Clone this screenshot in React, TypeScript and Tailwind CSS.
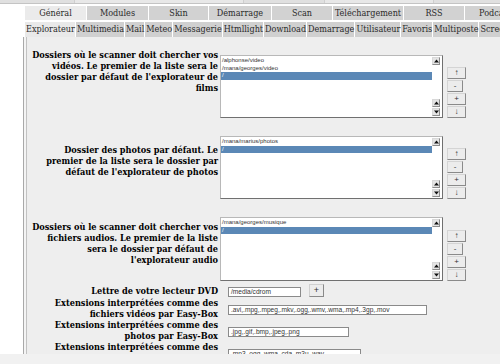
const serif = "font-['DejaVu_Serif_Condensed','DejaVu_Serif',serif]";
const sans = "font-['Liberation_Sans',Arial,sans-serif]";

const tabs = [
  { label: "Général", w: "w-[61px]", active: true },
  { label: "Modules", w: "w-[61px]" },
  { label: "Skin", w: "w-[59px]" },
  { label: "Démarrage", w: "w-[62px]" },
  { label: "Scan", w: "w-[60px]" },
  { label: "Téléchargement", w: "w-[70px]" },
  { label: "RSS", w: "w-[60px]" },
  { label: "Podcast", w: "w-[60px]" },
];

const subTabs = [
  "Explorateur",
  "Multimedia",
  "Mail",
  "Meteo",
  "Messagerie",
  "Htmllight",
  "Download",
  "Demarrage",
  "Utilisateur",
  "Favoris",
  "Multiposte",
  "Screensaver",
];

function Arrow({ down }: { down?: boolean }) {
  return (
    <div className="flex h-[8px] w-[8px] items-center justify-center border border-[#d8d8d8] border-r-[#8c8c8c] border-b-[#8c8c8c] bg-[#e4e4e4]">
      <svg width="5" height="4" viewBox="0 0 5 4">
        {down ? <path d="M0 0.5h5L2.5 3.5z" fill="#111" /> : <path d="M0 3.5h5L2.5 0.5z" fill="#111" />}
      </svg>
    </div>
  );
}

function ListBox({ items, h }: { items: string[]; h: string }) {
  return (
    <div className={`ml-[2px] flex w-[223px] shrink-0 border border-[#b8b8b8] border-r-[#707070] border-b-[#707070] bg-white ${h}`}>
      <div className={`flex-1 pt-px ${sans} text-[6px] text-[#333]`}>
        {items.map((it, i) =>
          i === items.length - 1 ? (
            <div key={i} className="h-[7.5px] bg-[#5b88b6] pl-px leading-[7.5px] text-white">
              {it}
            </div>
          ) : (
            <div key={i} className="h-[7.5px] pl-px leading-[7.5px]">
              {it}
            </div>
          )
        )}
      </div>
      <div className="flex w-[10px] flex-col justify-between py-px">
        <Arrow />
        <div className="flex flex-col gap-px">
          <Arrow />
          <Arrow down />
        </div>
      </div>
    </div>
  );
}

function SideButtons() {
  const btn =
    "flex h-[12px] items-center justify-center border border-[#d4d4d4] border-r-[#8a8a8a] border-b-[#8a8a8a] bg-[#ececec] text-[8px] leading-none text-[#333]";
  return (
    <div className={`ml-[4px] flex flex-col gap-px self-end ${sans}`}>
      <div className={`${btn} w-[19px]`}>↑</div>
      <div className={`${btn} w-[16px]`}>-</div>
      <div className={`${btn} w-[19px]`}>+</div>
      <div className={`${btn} w-[19px]`}>↓</div>
    </div>
  );
}

function FolderRow({ label, items, pt, h }: { label: string; items: string[]; pt: string; h: string }) {
  return (
    <div className="flex items-start">
      <div className={`w-[191px] shrink-0 text-right text-[9.1px] font-bold leading-[11px] text-black ${pt}`}>{label}</div>
      <div className="flex pt-[18px]">
        <ListBox items={items} h={h} />
        <SideButtons />
      </div>
    </div>
  );
}

function FieldRow({ label, value, w }: { label: string; value: string; w: string }) {
  return (
    <div className="flex h-[22px] items-center">
      <div className="w-[191px] shrink-0 text-right text-[9.1px] font-bold leading-[11px] text-black">{label}</div>
      <div
        className={`ml-[10px] mt-[3px] h-[10px] shrink-0 overflow-hidden border border-[#8a8a8a] bg-white pl-[2px] ${sans} text-[6.6px] leading-[8px] text-[#333] ${w}`}
      >
        {value}
      </div>
    </div>
  );
}

export default function App() {
  return (
    <div className={`flex h-[364px] w-[500px] flex-col overflow-hidden bg-white ${serif}`}>
      <div className="flex h-[354px] flex-col overflow-hidden">
        <div className="flex h-[4px] shrink-0 border-b border-[#c4c4c4] bg-[#e0e0e0]">
          <div className="ml-[74px] w-[170px] border-x border-[#cfcfcf] bg-[#e8e8e8]" />
          <div className="ml-[80px] w-[110px] border-x border-[#cfcfcf] bg-[#e8e8e8]" />
        </div>

        <div className="ml-[25px] mt-[2px] flex h-[14px] shrink-0 gap-px">
          {tabs.map((t) =>
            t.active ? (
              <div key={t.label} className={`${t.w} shrink-0 bg-[#ebebeb] text-center text-[9px] leading-[14px] text-[#2a2a2a]`}>
                {t.label}
              </div>
            ) : (
              <div key={t.label} className={`${t.w} shrink-0 bg-[#d2d2d2] text-center text-[9px] leading-[14px] text-[#2a2a2a]`}>
                {t.label}
              </div>
            )
          )}
        </div>

        <div className="ml-[25px] mt-[2px] flex h-[15px] shrink-0 gap-px whitespace-nowrap">
          {subTabs.map((s, i) =>
            i === 0 ? (
              <div key={s} className="shrink-0 bg-[#e9e9e9] pl-px text-[9px] leading-[15px] text-[#2a2a2a]">
                {s}
              </div>
            ) : (
              <div key={s} className="shrink-0 bg-[#d0d0d0] pl-px text-[9px] leading-[15px] text-[#2a2a2a]">
                {s}
              </div>
            )
          )}
        </div>

        <div className="ml-[23px] flex flex-1 border-l border-[#a9a9a9] bg-[#f4f4f4] pl-[2px]">
          <div className="flex-1 border-l border-[#c2c2c2] bg-[#eeeeee]">
            <FolderRow
              label="Dossiers où le scanner doit chercher vos vidéos. Le premier de la liste sera le dossier par défaut de l'explorateur de films"
              items={["/alphonse/video", "/mana/georges/video", "/"]}
              pt="pt-[12px]"
              h="h-[63px]"
            />
            <FolderRow
              label="Dossier des photos par défaut. Le premier de la liste sera le dossier par défaut de l'explorateur de photos"
              items={["/mana/marius/photos", "/"]}
              pt="pt-[26px]"
              h="h-[63px]"
            />
            <FolderRow
              label="Dossiers où le scanner doit chercher vos fichiers audios. Le premier de la liste sera le dossier par défaut de l'explorateur audio"
              items={["/mana/georges/musique", "/"]}
              pt="pt-[22px]"
              h="h-[64px]"
            />

            <div className="mt-[3px] flex h-[13px] items-center">
              <div className="w-[191px] shrink-0 text-right text-[9.1px] font-bold leading-[11px] text-black">
                Lettre de votre lecteur DVD
              </div>
              <div
                className={`ml-[10px] mt-[3px] h-[10px] w-[73px] shrink-0 border border-[#8a8a8a] bg-white pl-[2px] ${sans} text-[6.6px] leading-[8px] text-[#333]`}
              >
                /media/cdrom
              </div>
              <div
                className={`ml-[8px] flex h-[13px] w-[15px] items-center justify-center border border-[#d0d0d0] border-r-[#8a8a8a] border-b-[#8a8a8a] bg-[#ececec] ${sans} text-[9px] leading-none text-[#333]`}
              >
                +
              </div>
            </div>
            <FieldRow
              label="Extensions interprétées comme des fichiers vidéos par Easy-Box"
              value=".avi,.mpg,.mpeg,.mkv,.ogg,.wmv,.wma,.mp4,.3gp,.mov"
              w="w-[199px]"
            />
            <FieldRow label="Extensions interprétées comme des photos par Easy-Box" value=".jpg,.gif,.bmp,.jpeg,.png" w="w-[121px]" />
            <FieldRow
              label="Extensions interprétées comme des fichiers audios par Easy-Box"
              value=".mp3,.ogg,.wma,.cda,.m3u,.wav"
              w="w-[133px]"
            />
          </div>
        </div>
      </div>
      <div className="h-[10px] shrink-0 bg-[#f1f1f1]" />
    </div>
  );
}
